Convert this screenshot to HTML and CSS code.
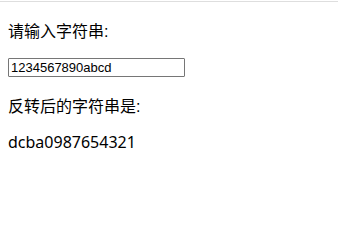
FILE: index.html
```html
<!DOCTYPE html>
<html lang="zh">
<head>
    <meta charset="UTF-8">
    <title>字符串反转</title>
    <link rel="stylesheet" href="styles.css">
</head>
<body>
    <div class="topline"></div>
    <div class="content">
        <p class="label">请输入字符串:</p>
        <input type="text" class="str-input" id="input" value="1234567890abcd">
        <p class="label">反转后的字符串是:</p>
        <p class="result" id="result">dcba0987654321</p>
    </div>
    <script>
        let input = document.getElementById("input");
        let result = document.getElementById("result");
        input.addEventListener("input", function () {
            result.innerText = input.value.split("").reverse().join("");
        });
    </script>
</body>
</html>
```

FILE: styles.css
```css
body {
    margin: 0;
    background: #fff;
    color: #000;
    font-family: "Liberation Sans", "Noto Sans CJK SC", sans-serif;
    font-size: 16px;
}
.topline {
    margin-top: 1px;
    height: 1px;
    background: #dedede;
}
.content {
    padding: 0 8px;
}
.label {
    margin: 16px 0;
}
.str-input {
    display: block;
    width: 177px;
    height: 19px;
    box-sizing: border-box;
    border: 1px solid #767676;
    border-radius: 1px;
    padding: 1px 2px;
    font-family: "Liberation Sans", sans-serif;
    font-size: 13px;
    color: #000;
}
.result {
    margin: 16px 0;
    font-family: "Noto Sans", "Noto Sans CJK SC", sans-serif;
    line-height: 18px;
}
```
